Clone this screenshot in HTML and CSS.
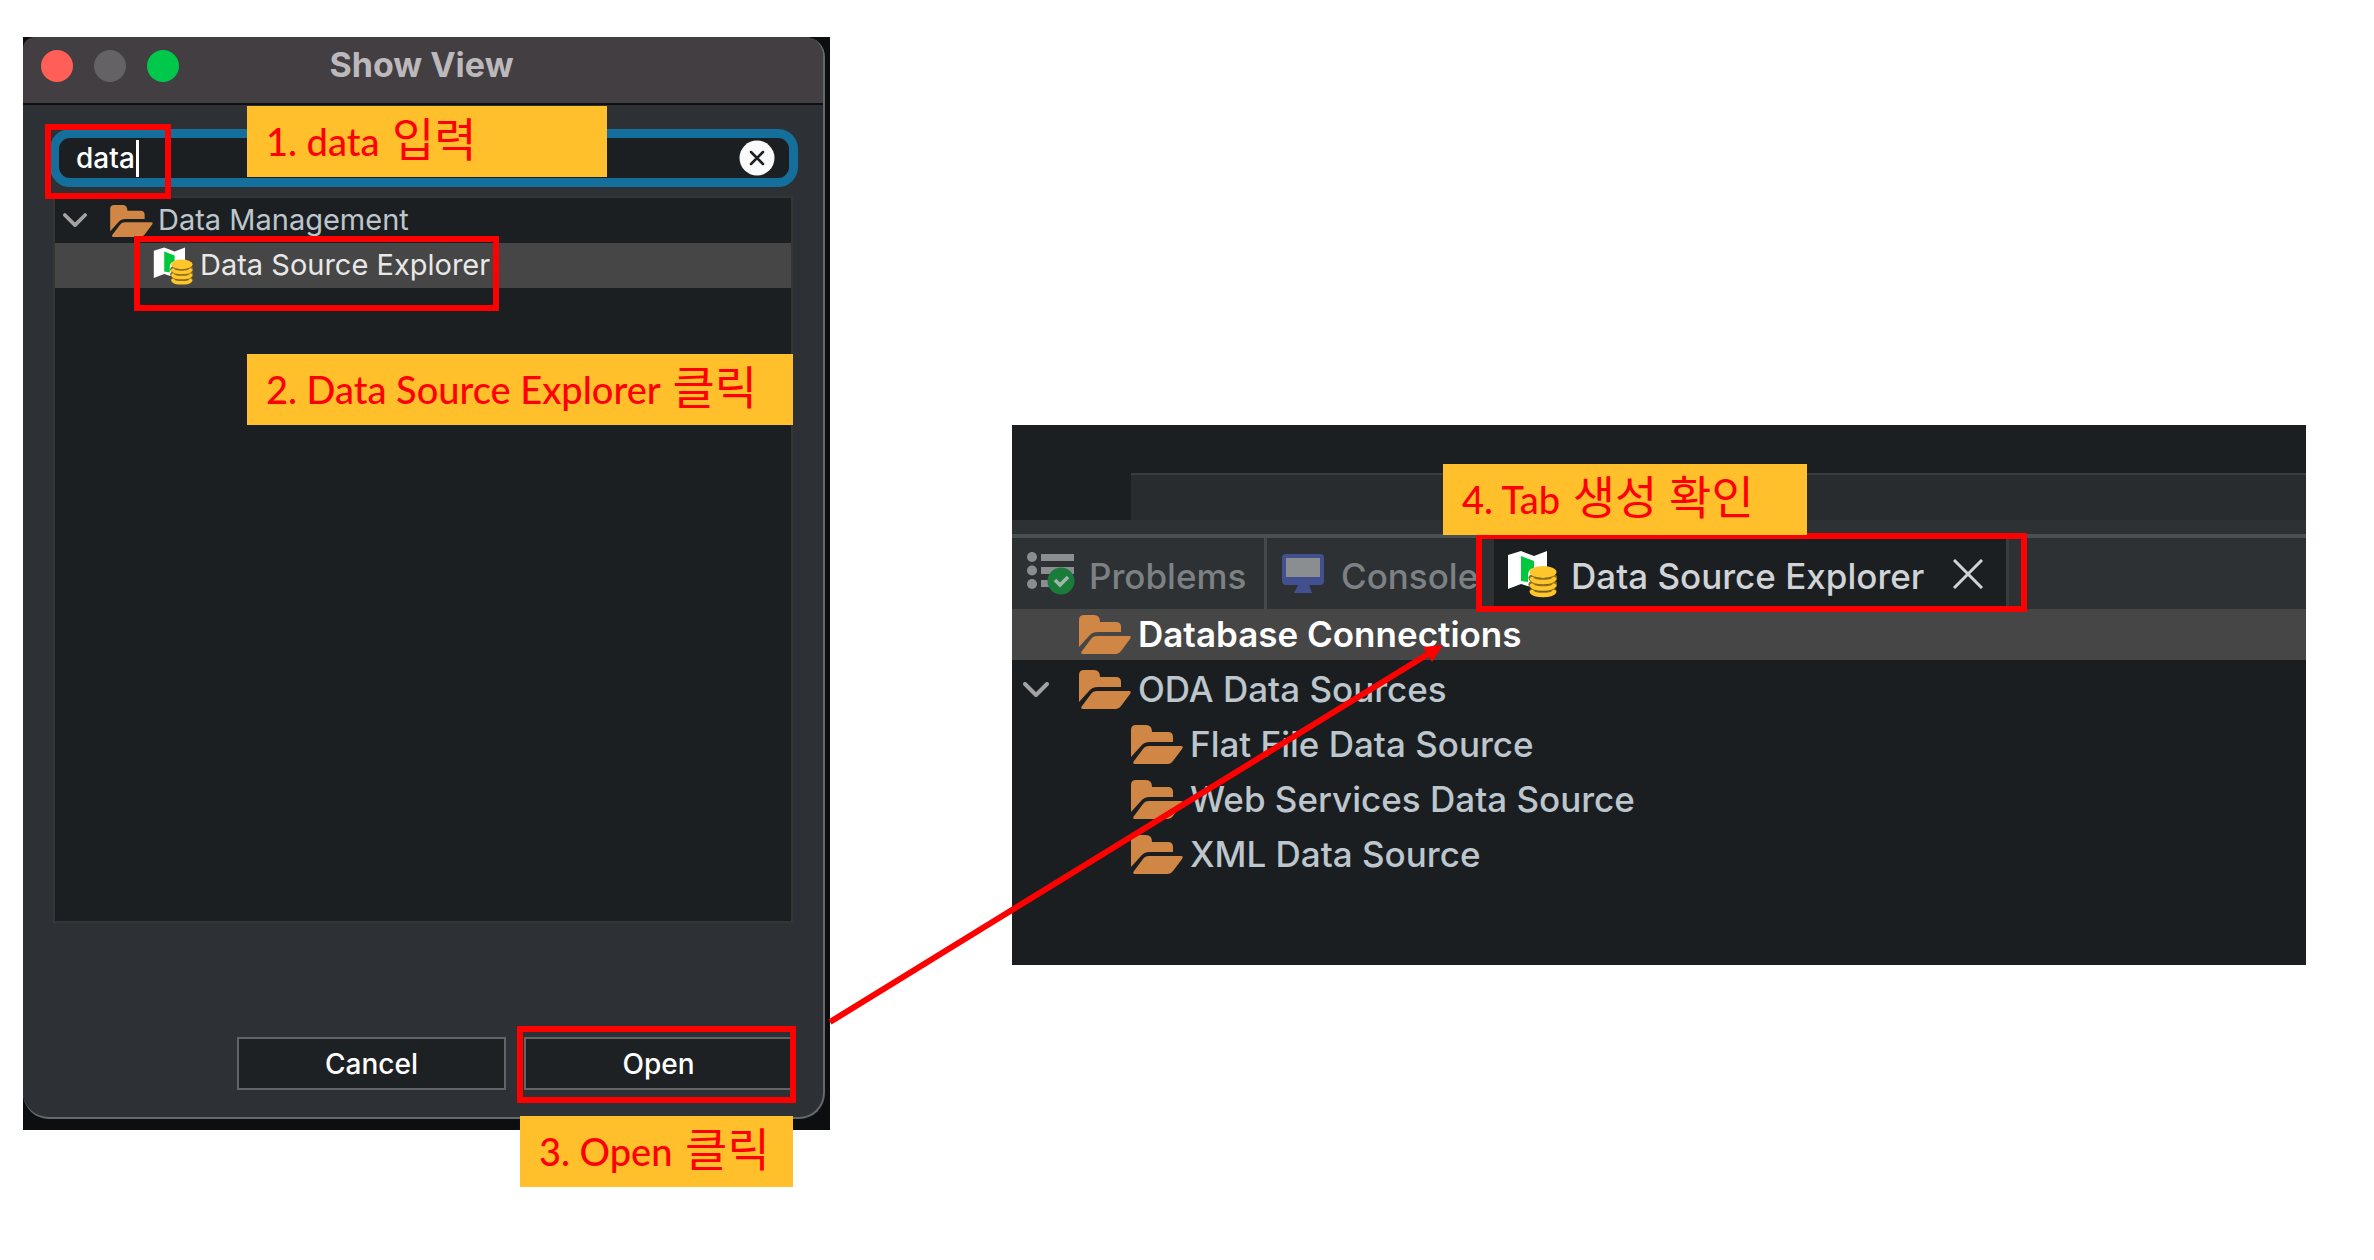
FILE: index.html
```html
<!DOCTYPE html>
<html lang="ko">
<head>
<meta charset="utf-8">
<title>Show View - Data Source Explorer</title>
<link rel="stylesheet" href="styles.css">
</head>
<body>
<svg class="defs" aria-hidden="true">
  <symbol id="folder" viewBox="0 0 52 39">
    <path fill="#d08745" d="M0 32V5Q0 0 5 0H15Q21 0 21 7H37Q42 7 42 12V17H19Q13 17 10 21Z"/>
    <path fill="#d08745" d="M18 21H50Q53 21 51 24L42 36Q40 39 37 39H4Q1 39 3 36L12 24Q14 21 18 21Z"/>
  </symbol>
  <symbol id="explorer" viewBox="0 0 50 48">
    <path fill="#fff" d="M1 5 14 1 27 6 40 1V22H24V37L14 34 1 39Z"/>
    <path fill="#00c83c" d="M14 6 27 11V18Q21 19 21 25V32L14 31Z"/>
    <g fill="none" stroke="#8a6c22" stroke-width="7" stroke-linecap="round">
      <path d="M25 28Q27 31.500 36 31.500T47 28"/><path d="M25 34.500Q27 38 36 38T47 34.500"/><path d="M25 41Q27 44 36 44T47 41" stroke-width="5"/>
    </g>
    <ellipse cx="36" cy="22" rx="13.500" ry="6" fill="#ffc62b"/>
    <g fill="none" stroke="#ffc62b" stroke-width="4.400" stroke-linecap="round">
      <path d="M25 29Q27 32 36 32T47 29"/><path d="M25 35.500Q27 38.500 36 38.500T47 35.500"/><path d="M25 42Q27 45 36 45T47 42"/>
    </g>
  </symbol>
  <symbol id="chevron" viewBox="0 0 26 16">
    <path d="M2 2 13 13 24 2" fill="none" stroke="#a2a2a2" stroke-width="4" stroke-linecap="round" stroke-linejoin="round"/>
  </symbol>
</svg>

<main class="guide">
  <section class="shot shot-dialog">
    <div class="dialog">
      <header class="titlebar">
        <span class="light red"></span><span class="light gray"></span><span class="light green"></span>
        <h1 class="title">Show View</h1>
      </header>
      <div class="dialog-body">
        <div class="search">
          <input class="search-input" type="text" value="data" aria-label="Filter views">
          <span class="caret"></span>
          <button class="clear" type="button" aria-label="Clear">
            <svg viewBox="0 0 36 36"><circle cx="18" cy="18" r="17.500" fill="#fafafa"/><path d="M12 12 24 24M24 12 12 24" stroke="#1c1f22" stroke-width="2.500" stroke-linecap="round"/></svg>
          </button>
        </div>
        <ul class="tree small-tree">
          <li class="row"><svg class="chev"><use href="#chevron"/></svg><svg class="folder"><use href="#folder"/></svg><span>Data Management</span></li>
          <li class="row child selected"><svg class="expl"><use href="#explorer"/></svg><span>Data Source Explorer</span></li>
        </ul>
        <div class="actions">
          <button class="action" type="button">Cancel</button>
          <button class="action" type="button">Open</button>
        </div>
      </div>
    </div>
    <div class="mark mark-input"></div>
    <div class="mark mark-item"></div>
    <div class="mark mark-open"></div>
    <p class="note note-1">1. data <span class="ko">입력</span></p>
    <p class="note note-2">2. Data Source Explorer <span class="ko">클릭</span></p>
    <p class="note note-3">3. Open <span class="ko">클릭</span></p>
  </section>

  <section class="shot shot-panel">
    <div class="editor"><div class="editor-foot"></div></div>
    <div class="sash"></div>
    <div class="tabs" role="tablist">
      <button class="tab tab-problems" type="button" role="tab">
        <svg class="list-icon" viewBox="0 0 48 43">
          <g fill="#8b8e90"><circle cx="5" cy="5" r="5"/><circle cx="5" cy="18.500" r="5"/><circle cx="5" cy="32" r="5"/><path d="M14 2H47V9H14ZM14 15H47V22H14ZM14 28H30V35H14Z"/></g>
          <circle cx="34" cy="29" r="13.500" fill="#1b7b3b"/><path d="M28 28 33 33 41 25" fill="none" stroke="#a1b5a8" stroke-width="3.600"/>
        </svg><span>Problems</span>
      </button>
      <button class="tab tab-console" type="button" role="tab">
        <svg class="monitor-icon" viewBox="0 0 43 39"><path fill="#42508f" d="M4 0H38Q42 0 42 4V27Q42 31 38 31H27L30 39H12L16 31H4Q0 31 0 27V4Q0 0 4 0Z"/><path fill="#8b8e90" d="M4 4H38V23H4Z"/></svg><span>Console</span>
      </button>
      <button class="tab tab-active" type="button" role="tab" aria-selected="true">
        <svg class="expl"><use href="#explorer"/></svg><span>Data Source Explorer</span>
        <svg class="close" viewBox="0 0 30 30"><path d="M1 1 29 29M29 1 1 29" stroke="#d0d4d7" stroke-width="3"/></svg>
      </button>
    </div>
    <ul class="tree big-tree">
      <li class="row selected"><svg class="folder"><use href="#folder"/></svg><span>Database Connections</span></li>
      <li class="row"><svg class="chev"><use href="#chevron"/></svg><svg class="folder"><use href="#folder"/></svg><span>ODA Data Sources</span></li>
      <li class="row child"><svg class="folder"><use href="#folder"/></svg><span>Flat File Data Source</span></li>
      <li class="row child"><svg class="folder"><use href="#folder"/></svg><span>Web Services Data Source</span></li>
      <li class="row child"><svg class="folder"><use href="#folder"/></svg><span>XML Data Source</span></li>
    </ul>
    <div class="mark mark-tab"></div>
    <p class="note note-4">4. Tab <span class="ko">생성 확인</span></p>
    <svg class="arrow" viewBox="0 0 620 390" aria-hidden="true"><path d="M2 382 605 11" stroke="red" stroke-width="6"/><path d="M615 5 595 7 604 22Z" fill="red"/></svg>
  </section>
</main>
</body>
</html>
```
FILE: styles.css
```css
* { box-sizing: border-box; }
body { margin: 0; background: #fff; font-family: Inter, "Noto Sans CJK KR", sans-serif; }
button, input { font: inherit; color: inherit; }
button { padding: 0; border: 0; background: none; }
p, h1, ul { margin: 0; padding: 0; }
ul { list-style: none; }
svg { display: block; flex: none; }
.defs { position: absolute; width: 0; height: 0; }

.guide {
  display: grid;
  grid-template-columns: 807fr 1294fr;
  column-gap: 182px;
  align-items: start;
  padding: 37px 68px 130px 23px;
}
.shot { position: relative; }

/* Show View dialog */
.shot-dialog { padding: 0 5px 11px 0; background: #0d0e10; }
.dialog {
  overflow: hidden;
  border: solid #65696b;
  border-width: 0 2px 2px 0;
  border-radius: 12px 20px 26px 26px;
  background: #2d3135;
}
.titlebar {
  display: flex;
  align-items: center;
  gap: 21px;
  height: 68px;
  padding: 0 18px 8px;
  border-bottom: 2px solid #0e0f10;
  background: #423e41;
}
.light { width: 32px; height: 32px; border-radius: 50%; }
.red { background: #ff5f57; }
.gray { background: #656266; }
.green { background: #00c84b; }
.title {
  flex: 1;
  padding: 0 162px 2px 0;
  color: #bcb9bd;
  font-size: 34px;
  line-height: 40px;
  font-weight: 700;
  text-align: center;
}
.dialog-body { padding: 24px 25px 27px 27px; }
.search { position: relative; display: flex; }
.search-input {
  width: 100%;
  height: 58px;
  padding: 0 60px 0 17px;
  border: 9px solid #156f9c;
  border-radius: 20px;
  outline: 0;
  background: #1c1f22;
  color: #fff;
  font-size: 28px;
  font-weight: 500;
}
.caret { position: absolute; left: 86px; top: 11px; width: 3px; height: 37px; background: #fff; }
.clear { position: absolute; right: 23px; top: 11px; width: 36px; height: 36px; }
.small-tree {
  height: 727px;
  margin: 9px 5px 114px 3px;
  border: 2px solid #353535;
  background: #1c1f22;
}
.row { display: flex; align-items: center; color: #bdc6cd; }
.row span { padding-bottom: 2px; }
.small-tree .row { height: 45px; padding-left: 8px; font-size: 29px; line-height: 32px; }
.small-tree .chev { width: 24px; height: 15px; margin-right: 23px; }
.small-tree .folder { width: 43px; height: 32px; margin-right: 5px; }
.small-tree .child { padding-left: 98px; }
.small-tree .expl { width: 40px; height: 40px; margin-right: 7px; }
.row.selected { background: #464646; color: #e8e8e8; }
.actions { display: grid; grid-template-columns: 269px 269px; justify-content: end; gap: 18px; margin-right: 5px; }
.action {
  height: 53px;
  border: 2px solid #626567;
  background: #1e2124;
  color: #fff;
  font-size: 28px;
  font-weight: 500;
}

/* Views panel */
.shot-panel { margin-top: 388px; background: #1a1e21; }
.editor { padding: 48px 0 0 119px; background: #1c1f22; }
.editor-foot { height: 47px; border-top: 2px solid #383c3e; background: #292c2f; }
.sash { height: 18px; border-bottom: 4px solid #4b5053; background: #2d3134; }
.tabs { display: flex; height: 71px; background: #2d3134; }
.tab { display: flex; align-items: center; color: #7d8184; font-size: 35px; font-weight: 500; }
.tab span { padding-top: 4px; }
.tab-problems { width: 255px; padding-left: 15px; border-right: 3px solid #45494c; }
.tab-console { width: 227px; padding-left: 15px; }
.tab-active { width: 515px; padding-left: 13px; border-right: 3px solid #383c3f; background: #1c1f22; color: #d0d4d7; }
.list-icon { width: 48px; height: 43px; margin-right: 14px; }
.monitor-icon { width: 43px; height: 39px; margin-right: 16px; }
.tab .expl { width: 50px; height: 48px; margin-right: 14px; }
.close { width: 30px; height: 30px; margin-left: 29px; }
.big-tree { padding-bottom: 83px; }
.big-tree .row { height: 55px; padding-left: 67px; font-size: 35px; font-weight: 500; }
.big-tree .row.selected { height: 51px; margin-bottom: 2px; color: #fff; font-weight: 600; }
.big-tree .row:has(.chev) { padding-left: 11px; }
.big-tree .chev { width: 26px; height: 16px; margin-right: 30px; }
.big-tree .folder { width: 52px; height: 39px; margin-right: 7px; }
.big-tree .child { padding-left: 119px; }

/* Annotations laid over the screens */
.mark { position: absolute; border: 6px solid #f00; }
.mark-input { left: 22px; top: 87px; width: 126px; height: 75px; }
.mark-item { left: 111px; top: 199px; width: 365px; height: 75px; }
.mark-open { right: 34px; bottom: 27px; width: 279px; height: 77px; }
.mark-tab { left: 464px; top: 108px; width: 551px; height: 79px; }
.note {
  position: absolute;
  height: 71px;
  padding-left: 19px;
  background: #ffc02b;
  color: #f00;
  font-family: Lato, "Noto Sans CJK KR", sans-serif;
  font-size: 38px;
  font-weight: 500;
  line-height: 71px;
  white-space: nowrap;
}
.ko { margin-left: 3px; font-size: 46px; font-weight: 400; line-height: 1; }
.note-1 { left: 224px; top: 69px; width: 360px; }
.note-2 { left: 224px; top: 317px; width: 546px; }
.note-3 { right: 37px; bottom: -57px; width: 273px; }
.note-4 { left: 431px; top: 39px; width: 364px; }
.arrow { position: absolute; left: -184px; top: 215px; width: 620px; height: 390px; }
```
